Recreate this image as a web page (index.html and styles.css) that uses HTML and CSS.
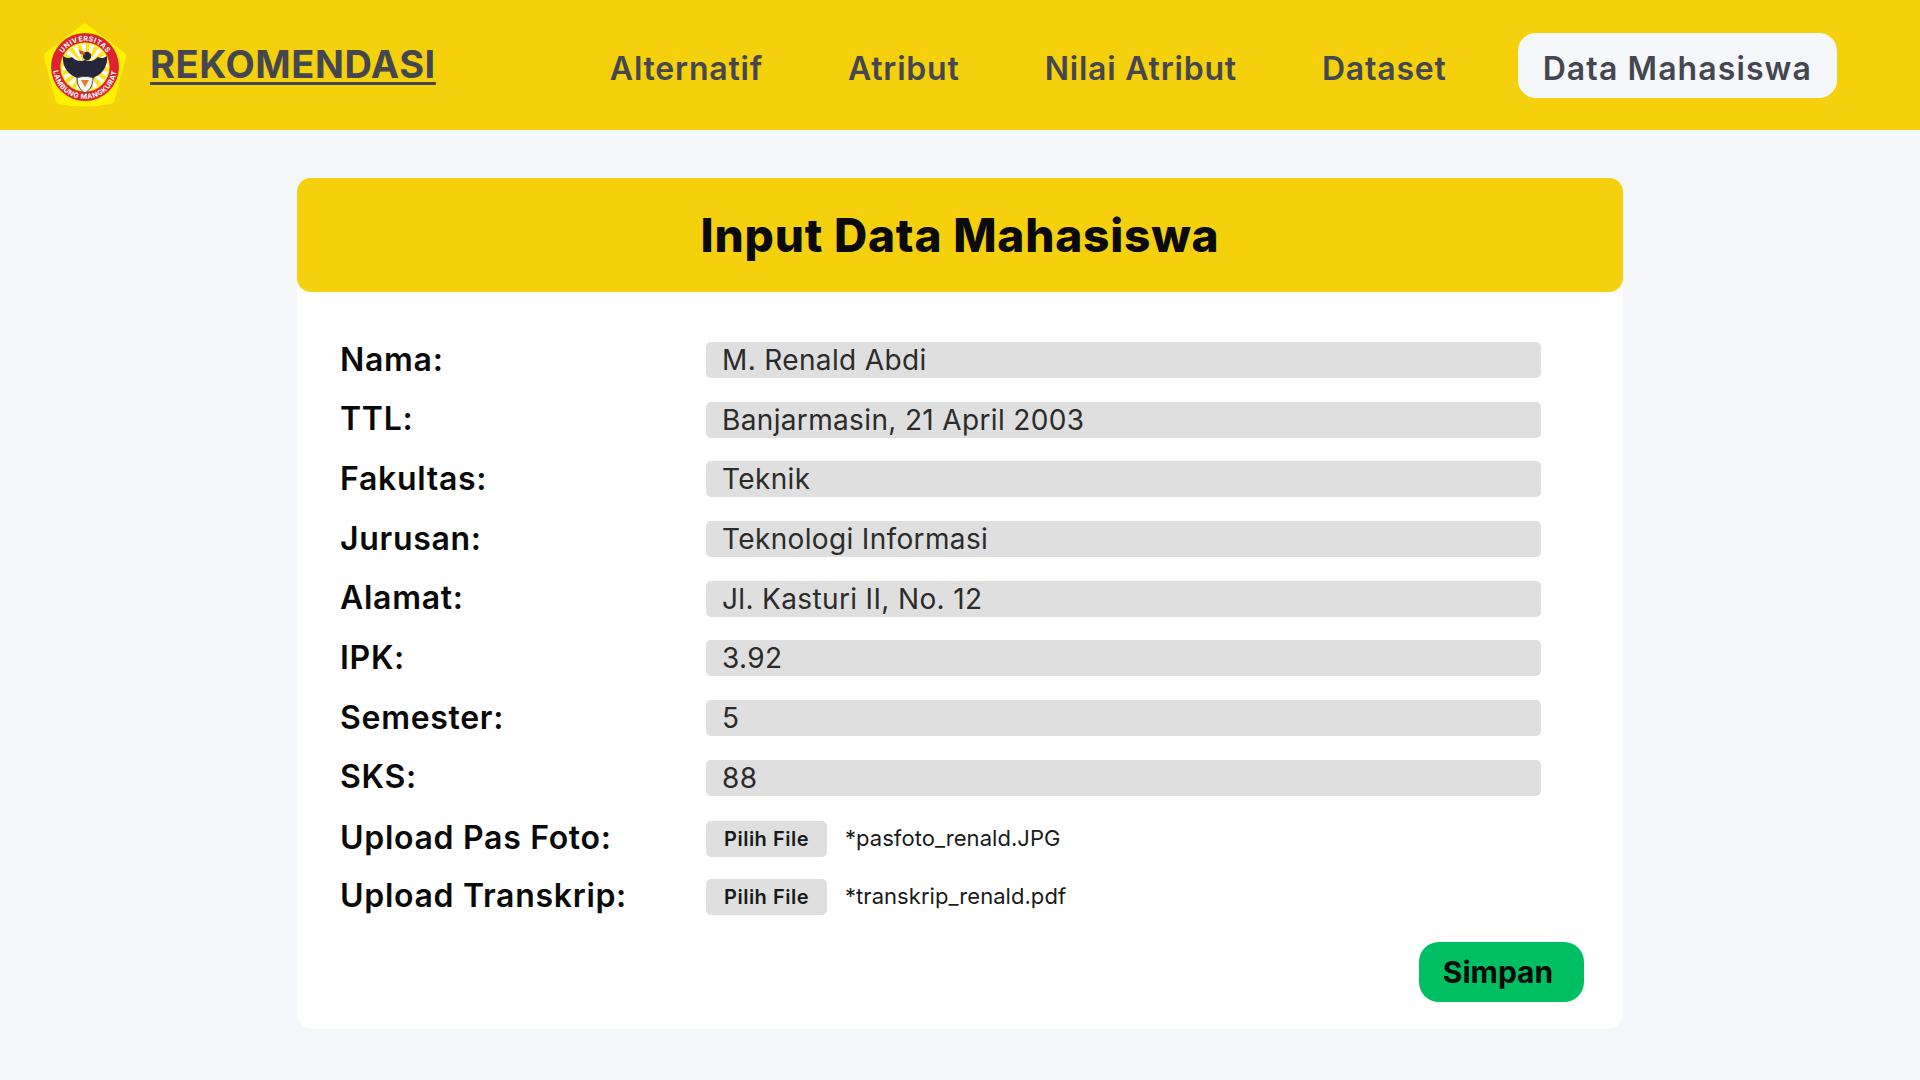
FILE: index.html
```html
<!DOCTYPE html>
<html lang="en">
<head>
  <meta charset="UTF-8">
  <meta name="viewport" content="width=device-width, initial-scale=1.0">
  <title>Input Data Mahasiswa</title>
  <link rel="stylesheet" href="styles.css">
</head>
<body>
  <div class="navbar">
    <div class="brand">
      <svg class="logo" viewBox="0 0 90 90" width="90" height="90" aria-hidden="true">
        <path d="M45 3 L85 33 Q86 35 86 37 L74 82 Q73 84 71 84 Q45 89 19 84 Q17 84 16 82 L4 37 Q4 35 5 33 Z" fill="#fff200"/>
        <circle cx="45" cy="47" r="34" fill="#dd2230"/>
        <circle cx="45" cy="47" r="24" fill="#fff"/>
        <!-- rays behind the eagle -->
        <circle cx="45" cy="47" r="11.5" fill="none" stroke="#ffe11a" stroke-width="23" stroke-dasharray="2.26 2.26"/>
        <circle cx="45" cy="47" r="24" fill="none" stroke="#fff200" stroke-width="1.2"/>
        <path d="M45 40C40 42 36 41 32 37 29 39 26 38 23 36 22 44 26 53 35 57 38 59 41 59 45 57 49 59 52 59 55 57 64 53 68 44 67 36 64 38 61 39 58 37 54 41 50 42 45 40Z" fill="#26263a"/>
        <circle cx="47" cy="36" r="4.2" fill="#26263a"/>
        <path d="M45 32l-6-2 1 4 5 1z" fill="#d8542a"/>
        <path d="M37 58c0 7 3 12 8 15 5-3 8-8 8-15-4-2-12-2-16 0z" fill="#f4f4f4" stroke="#4a4a58" stroke-width="1"/>
        <path d="M41 60h8l-4 7z" fill="#e8792b"/>
        <defs>
          <path id="ringTop" d="M19 47A26 26 0 1 1 71 47"/>
          <path id="ringBottom" d="M13 47A32 32 0 0 0 77 47"/>
        </defs>
        <text class="logo-ring"><textPath href="#ringTop" startOffset="50%" text-anchor="middle">UNIVERSITAS</textPath></text>
        <text class="logo-ring"><textPath href="#ringBottom" startOffset="50%" text-anchor="middle">LAMBUNG MANGKURAT</textPath></text>
      </svg>
      <a href="#" class="brand-name">REKOMENDASI</a>
    </div>
    <div class="navigation">
      <a href="#">Alternatif</a>
      <a href="#">Atribut</a>
      <a href="#">Nilai Atribut</a>
      <a href="#">Dataset</a>
      <a href="#" class="active">Data Mahasiswa</a>
    </div>
  </div>

  <div class="form-card">
    <div class="form-header">
      <h1>Input Data Mahasiswa</h1>
    </div>
    <div class="form-body">
      <div class="fields">
        <div class="field"><label>Nama:</label><div class="input">M. Renald Abdi</div></div>
        <div class="field"><label>TTL:</label><div class="input">Banjarmasin, 21 April 2003</div></div>
        <div class="field"><label>Fakultas:</label><div class="input">Teknik</div></div>
        <div class="field"><label>Jurusan:</label><div class="input">Teknologi Informasi</div></div>
        <div class="field"><label>Alamat:</label><div class="input">Jl. Kasturi II, No. 12</div></div>
        <div class="field"><label>IPK:</label><div class="input">3.92</div></div>
        <div class="field"><label>Semester:</label><div class="input">5</div></div>
        <div class="field"><label>SKS:</label><div class="input">88</div></div>
      </div>
      <div class="uploads">
        <div class="field"><label>Upload Pas Foto:</label><button class="file-btn">Pilih File</button><span class="file-name">*pasfoto_renald.JPG</span></div>
        <div class="field"><label>Upload Transkrip:</label><button class="file-btn">Pilih File</button><span class="file-name">*transkrip_renald.pdf</span></div>
      </div>
      <div class="form-actions">
        <button class="save-btn">Simpan</button>
      </div>
    </div>
  </div>
</body>
</html>
```

FILE: styles.css
```css
:root {
  --yellow: #f4d00d;
  --page-bg: #f5f7fa;
  --nav-text: #454750;
  --input-bg: #dfdfdf;
  --green: #00bf63;
}

* {
  box-sizing: border-box;
  margin: 0;
  padding: 0;
}

body {
  font-family: Inter, 'Noto Sans', sans-serif;
  background-color: var(--page-bg);
  color: #111;
  height: 1080px;
  overflow: hidden;
}

.navbar {
  background-color: var(--yellow);
  height: 130px;
  padding: 0 83px 0 40px;
  display: flex;
  justify-content: space-between;
  align-items: center;
}

.brand {
  display: flex;
  align-items: center;
  gap: 20px;
}

.logo-ring {
  font-size: 7px;
  font-weight: 700;
  fill: #fff;
  letter-spacing: 0.5px;
}

.brand-name {
  color: var(--nav-text);
  font-size: 38px;
  font-weight: 700;
  letter-spacing: 0.55px;
  text-decoration: underline;
  text-decoration-thickness: 3px;
  text-underline-offset: 4px;
  margin-top: -3px;
}

.navigation {
  display: flex;
  align-items: center;
  gap: 35px;
}

.navigation a {
  text-decoration: none;
  color: var(--nav-text);
  font-size: 32px;
  font-weight: 600;
  letter-spacing: 0.8px;
  padding: 7px 25px 0;
  height: 65px;
  line-height: 58px;
  border-radius: 18px;
}

.navigation a.active {
  background-color: var(--page-bg);
  margin-left: 11px;
  letter-spacing: 1.1px;
}

.form-card {
  width: 1326px;
  margin: 48px 0 0 297px;
  background-color: white;
  border-radius: 16px;
  height: 851px;
}

.form-header {
  background-color: var(--yellow);
  height: 114px;
  border-radius: 14px;
  display: flex;
  align-items: center;
  justify-content: center;
}

.form-header h1 {
  font-size: 46px;
  font-weight: 800;
  letter-spacing: 0.8px;
  color: #0a0a0a;
}

.form-body {
  padding: 50px 39px 0 43px;
}

.fields {
  display: flex;
  flex-direction: column;
  gap: 23.7px;
  margin-right: 43px;
}

.field {
  display: flex;
  align-items: center;
  height: 36px;
}

.field label {
  width: 366px;
  flex-shrink: 0;
  font-size: 32px;
  font-weight: 600;
  letter-spacing: 0.7px;
  color: #0a0a0a;
  margin-top: -2px;
}

.input {
  flex: 1;
  height: 36px;
  line-height: 36px;
  background-color: var(--input-bg);
  border-radius: 5px;
  padding-left: 16px;
  font-size: 28px;
  letter-spacing: 0.35px;
  color: #2b2b2b;
}

.uploads {
  display: flex;
  flex-direction: column;
  gap: 22px;
  margin-top: 25px;
}

.file-btn {
  width: 121px;
  height: 36px;
  background-color: var(--input-bg);
  border: none;
  border-radius: 5px;
  font-family: inherit;
  font-size: 20px;
  font-weight: 600;
  letter-spacing: 0.5px;
  color: #1a1a1a;
}

.file-name {
  margin-left: 18px;
  font-size: 22px;
  letter-spacing: 0.05px;
  color: #1a1a1a;
  margin-top: -2px;
}

.form-actions {
  display: flex;
  justify-content: flex-end;
  margin-top: 27px;
}

.save-btn {
  width: 165px;
  height: 60px;
  padding-right: 7px;
  background-color: var(--green);
  border: none;
  border-radius: 20px;
  font-family: inherit;
  font-size: 30px;
  font-weight: 700;
  color: #0a0a0a;
}
```
